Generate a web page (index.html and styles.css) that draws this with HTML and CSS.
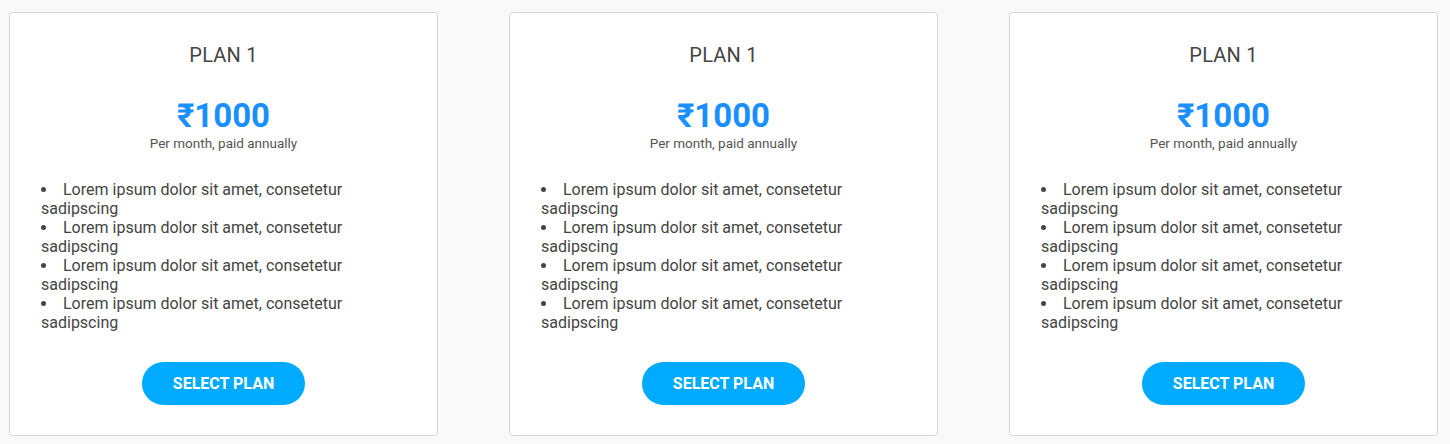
FILE: index.html
```html
<!DOCTYPE html>
<html>
<head>
<meta charset="utf-8">
<link rel="stylesheet" href="styles.css">
</head>
<body>
<div class="plans">
  <div class="card">
    <h3 class="plan-name">PLAN 1</h3>
    <div class="price">₹1000</div>
    <div class="period">Per month, paid annually</div>
    <ul class="features">
      <li>Lorem ipsum dolor sit amet, consetetur sadipscing</li>
      <li>Lorem ipsum dolor sit amet, consetetur sadipscing</li>
      <li>Lorem ipsum dolor sit amet, consetetur sadipscing</li>
      <li>Lorem ipsum dolor sit amet, consetetur sadipscing</li>
    </ul>
    <button class="select">SELECT PLAN</button>
  </div>
  <div class="card">
    <h3 class="plan-name">PLAN 1</h3>
    <div class="price">₹1000</div>
    <div class="period">Per month, paid annually</div>
    <ul class="features">
      <li>Lorem ipsum dolor sit amet, consetetur sadipscing</li>
      <li>Lorem ipsum dolor sit amet, consetetur sadipscing</li>
      <li>Lorem ipsum dolor sit amet, consetetur sadipscing</li>
      <li>Lorem ipsum dolor sit amet, consetetur sadipscing</li>
    </ul>
    <button class="select">SELECT PLAN</button>
  </div>
  <div class="card">
    <h3 class="plan-name">PLAN 1</h3>
    <div class="price">₹1000</div>
    <div class="period">Per month, paid annually</div>
    <ul class="features">
      <li>Lorem ipsum dolor sit amet, consetetur sadipscing</li>
      <li>Lorem ipsum dolor sit amet, consetetur sadipscing</li>
      <li>Lorem ipsum dolor sit amet, consetetur sadipscing</li>
      <li>Lorem ipsum dolor sit amet, consetetur sadipscing</li>
    </ul>
    <button class="select">SELECT PLAN</button>
  </div>
</div>
</body>
</html>
```
FILE: styles.css
```css
html, body {
  margin: 0;
  padding: 0;
  background: #f9f9f9;
  font-family: Roboto, "Noto Sans", sans-serif;
  color: #444;
}
.plans {
  display: flex;
  gap: 71px;
  padding: 12px 0 0 9px;
}
.card {
  box-sizing: border-box;
  width: 429px;
  height: 424px;
  background: #fff;
  border: 1px solid #d4d4d4;
  border-radius: 4px;
  padding: 0 31px;
  display: flex;
  flex-direction: column;
  align-items: center;
}
.plan-name {
  margin: 30px 0 0;
  font-size: 20px;
  font-weight: 400;
  line-height: 24px;
  color: #444;
  letter-spacing: 0.2px;
}
.price {
  margin-top: 30px;
  font-size: 33px;
  font-weight: 700;
  line-height: 38px;
  color: #1a8fff;
}
.period {
  font-size: 13.5px;
  line-height: 16px;
  color: #555;
}
.features {
  align-self: stretch;
  margin: 29px 0 0;
  padding: 0;
  list-style-position: inside;
  font-size: 16px;
  line-height: 19px;
  color: #444;
}
.select {
  margin-top: 30px;
  width: 163px;
  height: 43px;
  border: none;
  border-radius: 22px;
  background: #00aaff;
  color: #fff;
  font-family: Roboto, sans-serif;
  font-weight: 700;
  font-size: 16px;
}
```
